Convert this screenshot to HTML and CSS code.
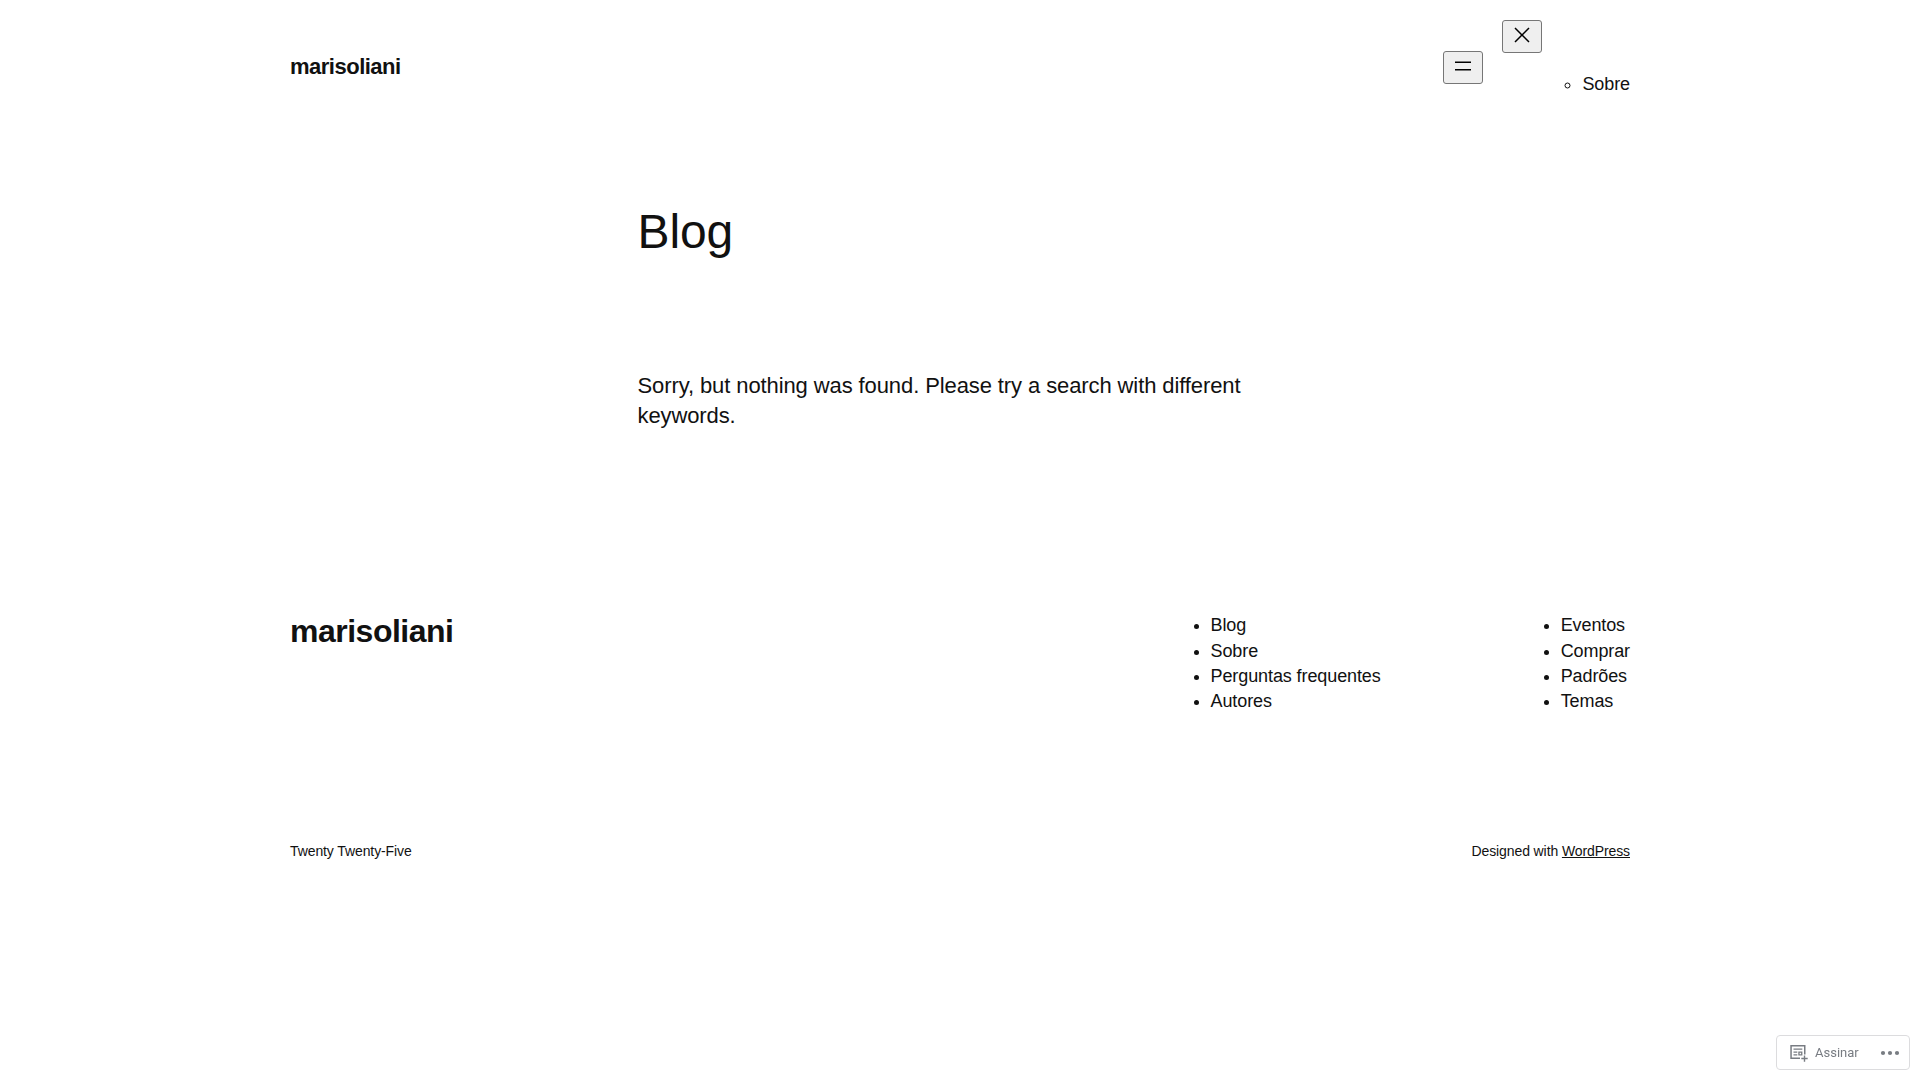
FILE: index.html
```html
<!DOCTYPE html>
<html lang="pt-BR">
<head>
<meta charset="utf-8">
<title>Blog – marisoliani</title>
<link rel="stylesheet" href="styles.css">
</head>
<body>
<header class="header">
  <p class="site-title">marisoliani</p>
  <nav class="nav">
    <button class="icon-button" aria-label="Menu"><svg width="24" height="24" viewBox="0 0 24 24"><path d="M4 7.500h16v1.500H4z"/><path d="M4 15h16v1.500H4z"/></svg></button>
    <div class="menu">
      <button class="icon-button" aria-label="Fechar"><svg width="24" height="24" viewBox="0 0 24 24"><path d="m13.06 12 6.47-6.47-1.06-1.06L12 10.94 5.53 4.47 4.47 5.53 10.94 12l-6.47 6.47 1.06 1.06L12 13.06l6.47 6.47 1.06-1.06L13.06 12Z"/></svg></button>
      <ul class="menu-list"><li>Sobre</li></ul>
    </div>
  </nav>
</header>
<main class="main">
  <h1 class="page-title">Blog</h1>
  <p class="message">Sorry, but nothing was found. Please try a search with different keywords.</p>
</main>
<footer class="footer">
  <div class="footer-top">
    <h2 class="footer-title">marisoliani</h2>
    <div class="footer-navs">
      <ul class="footer-list"><li>Blog</li><li>Sobre</li><li>Perguntas frequentes</li><li>Autores</li></ul>
      <ul class="footer-list"><li>Eventos</li><li>Comprar</li><li>Padrões</li><li>Temas</li></ul>
    </div>
  </div>
  <div class="footer-bottom">
    <p>Twenty Twenty-Five</p>
    <p>Designed with <a class="link" href="#">WordPress</a></p>
  </div>
</footer>
<div class="actionbar">
  <svg class="follow-icon" width="20" height="20" viewBox="0 0 20 20"><path d="M1.300 2h15.200v9.500H15V3.600H2.800v10.900H11V16H1.300z"/><path fill-rule="evenodd" d="M4.500 5.500h8.800v1.300H4.500zM4.500 8.400h3.800v1.300H4.500zM4.500 11.200h3.800v1.300H4.500zM9.300 8.400h4.100v4.100h-4.100zm1.300 1.300v1.500h1.500v-1.500zM14.800 12.500h1.400v2.300h2.500v1.400h-2.500v2.500h-1.400v-2.500h-2.500v-1.400h2.500z"/></svg>
  <span class="follow">Assinar</span>
  <svg class="dots" width="20" height="6" viewBox="0 0 20 6"><circle cx="3" cy="3" r="2.100"/><circle cx="10" cy="3" r="2.100"/><circle cx="17" cy="3" r="2.100"/></svg>
</div>
</body>
</html>
```
FILE: styles.css
```css
* { box-sizing: border-box; }
body { margin: 0; background: #fff; color: #111; font: 300 22px/1.4 "Liberation Sans", Arial, sans-serif; letter-spacing: -0.1px; }
p, h1, h2, ul { margin: 0; }
.header { width: 1340px; height: 134px; margin: 0 auto; display: flex; align-items: center; justify-content: space-between; }
.site-title { font-size: 22px; font-weight: 700; letter-spacing: -0.5px; }
.nav { display: flex; align-items: center; gap: 19px; font-size: 18px; }
.icon-button { width: 40px; height: 33px; padding: 0 6px 2px; border: 1px solid #767676; border-radius: 3px; background: #efefef; }
.icon-button svg { display: block; margin: 0 auto; }
.menu { display: flex; flex-direction: column; align-items: flex-start; gap: 19px; padding-bottom: 17px; }
.menu-list { padding: 0 0 0 80px; list-style: circle; }
.main { width: 645px; margin: 0 auto; }
.page-title { margin-top: 63px; font-size: 48px; line-height: 70px; font-weight: 400; }
.message { margin-top: 104px; line-height: 30px; }
.footer { width: 1340px; margin: 179px auto 0; }
.footer-top { display: flex; justify-content: space-between; }
.footer-title { font-size: 32px; line-height: 42px; letter-spacing: -0.5px; }
.footer-navs { display: flex; gap: 140px; padding-top: 3.4px; }
.footer-list { padding-left: 40px; font-size: 18px; line-height: 25.2px; }
.footer-bottom { display: flex; justify-content: space-between; margin-top: 127.6px; font-size: 14px; }
.link { color: inherit; }
.actionbar { position: fixed; right: 10px; bottom: 10px; width: 134px; height: 35px; border: 1px solid #dcdcde; border-radius: 4px; display: flex; align-items: center; padding-left: 12px; color: #787c82; fill: #787c82; font: 400 13px/20px Roboto, sans-serif; letter-spacing: 0; }
.follow { margin-left: 6px; margin-right: 21px; }
```
